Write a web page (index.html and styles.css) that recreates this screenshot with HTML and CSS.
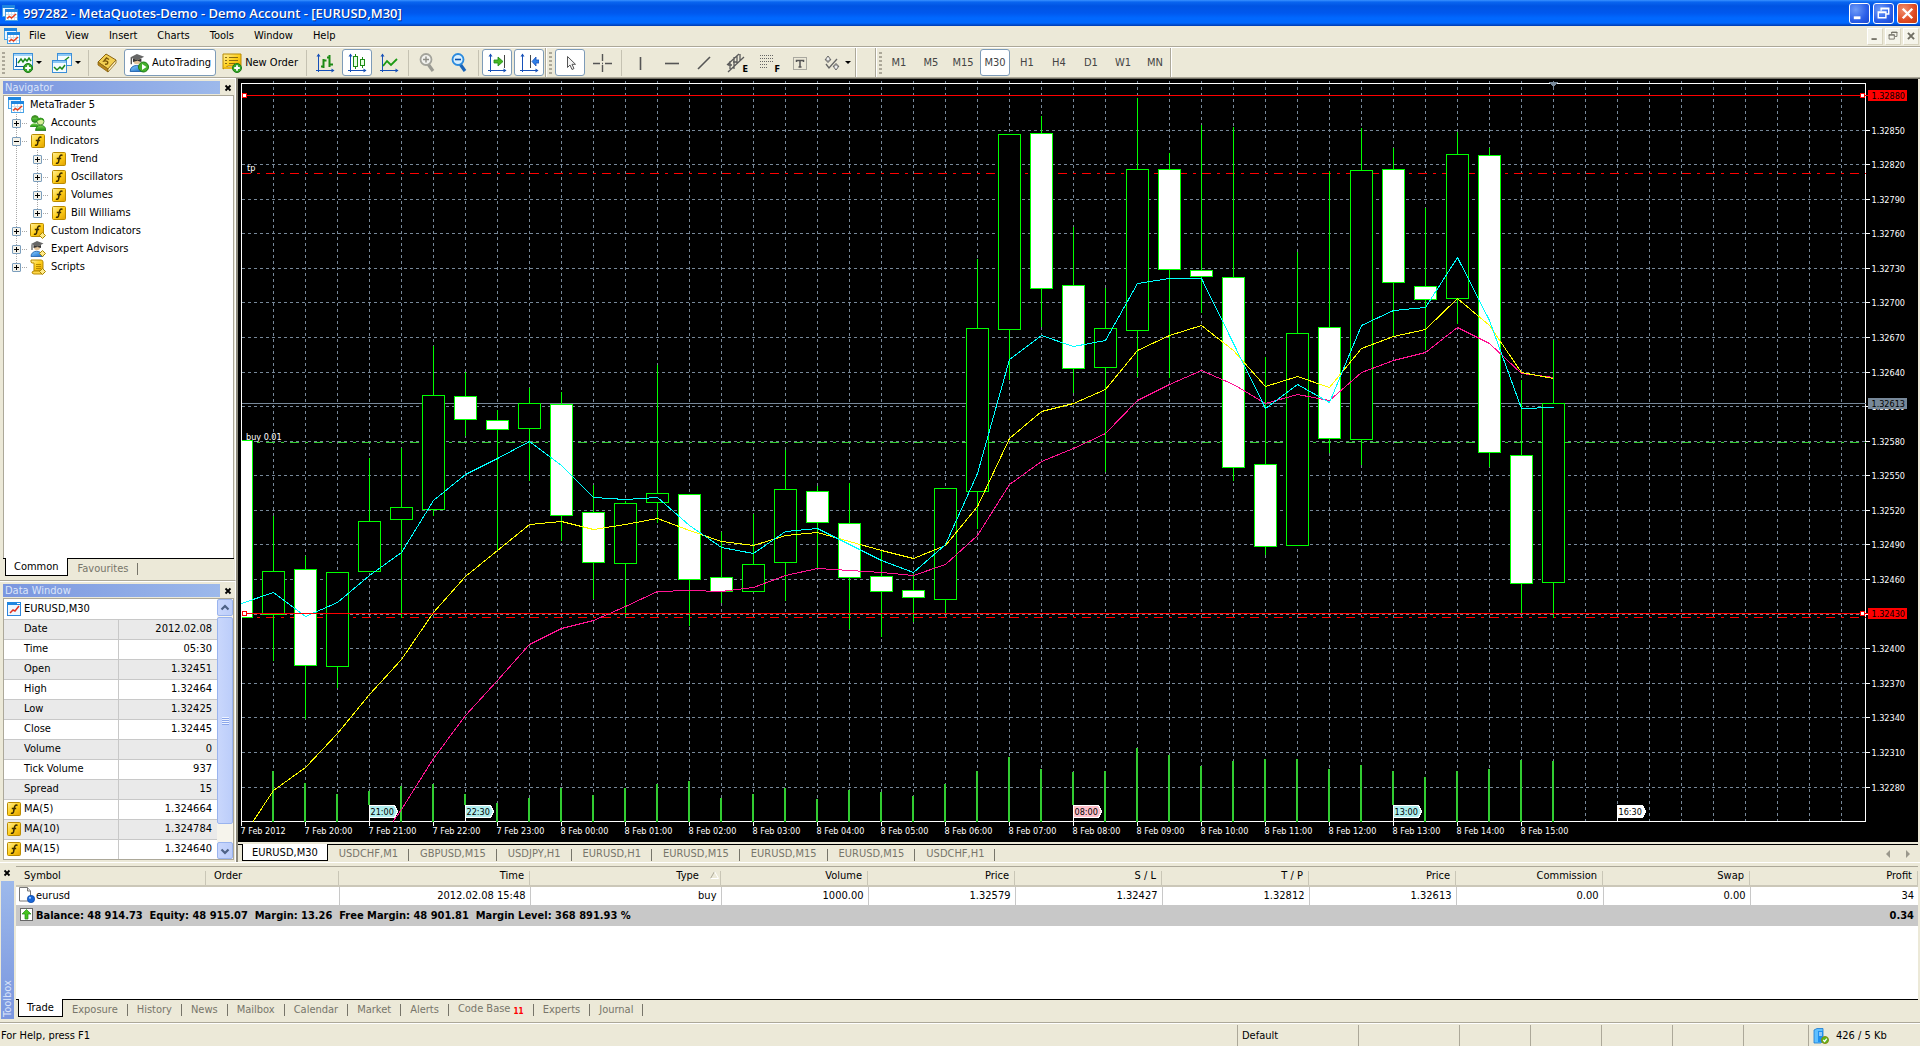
FILE: index.html
```html
<!DOCTYPE html>
<html lang="en">
<head>
<meta charset="utf-8">
<title>997282 - MetaQuotes-Demo - Demo Account - [EURUSD,M30]</title>
<link rel="stylesheet" href="styles.css">
</head>
<body>
<svg class="sprite" aria-hidden="true">
  <defs>
    <linearGradient id="g-gold" x1="0" y1="0" x2="1" y2="1"><stop offset="0" stop-color="#fff0a0"/><stop offset=".5" stop-color="#ffcf1a"/><stop offset="1" stop-color="#e0a000"/></linearGradient>
    <linearGradient id="g-green" x1="0" y1="0" x2="0" y2="1"><stop offset="0" stop-color="#7fdc50"/><stop offset="1" stop-color="#1e8c12"/></linearGradient>
    <linearGradient id="g-blue" x1="0" y1="0" x2="1" y2="1"><stop offset="0" stop-color="#8cd0ff"/><stop offset="1" stop-color="#1668c8"/></linearGradient>
  </defs>
  <symbol id="i-app" viewBox="0 0 16 16">
    <rect x=".5" y=".5" width="12" height="11" fill="#eaf6ff" stroke="#4aa3e6"/><rect width="13" height="3" fill="#1f86e0"/>
    <rect x="3.500" y="4.500" width="12" height="11" fill="#fff" stroke="#4aa3e6"/><rect x="3" y="4" width="13" height="3" fill="#1f86e0"/>
    <path d="M6.500 7v8M9.500 7v8M12.500 7v8M4 9.500h11M4 12.500h11" stroke="#cfe0ee"/>
    <path d="M5 13.500l2.500-2 2 1.500 4.500-4" fill="none" stroke="#e8401c" stroke-width="1.500"/>
  </symbol>
  <symbol id="i-chartwin" viewBox="0 0 14 14">
    <rect x=".5" y=".5" width="13" height="13" fill="#eef7ff" stroke="#2c86dc"/><rect width="14" height="3" fill="#1f86e0"/>
    <path d="M3 11l3-3 2 1 4-5" fill="none" stroke="#e03020" stroke-width="1.500"/><path d="M10 1.500h3" stroke="#fff"/>
  </symbol>
  <symbol id="i-func" viewBox="0 0 14 14">
    <rect x=".5" y=".5" width="13" height="13" rx="1" fill="url(#g-gold)" stroke="#b98a00"/>
    <path d="M10.500 3.500C8.500 2.500 7.800 3.500 7.300 6L6.500 10C6.200 11.300 5 11.600 4 11M4.800 6.500h4.400" fill="none" stroke="#3c2c00" stroke-width="1.500"/>
  </symbol>
  <symbol id="i-custom" viewBox="0 0 16 16">
    <use href="#i-func" width="14" height="14"/><path d="M12.500 9.500l3 3-3 3-3-3z" fill="#ffe98a" stroke="#a88600"/>
  </symbol>
  <symbol id="i-people" viewBox="0 0 16 16">
    <circle cx="5" cy="4" r="3.500" fill="url(#g-green)" stroke="#1d6d12" stroke-width=".7"/><path d="M0 12c0-5 9-5 9 0z" fill="url(#g-green)"/>
    <path d="M2 3c0-3 6-3 6 0l-3-.5z" fill="#3f8f20"/>
    <circle cx="10.500" cy="6.500" r="3.500" fill="#d7ef98" stroke="#1d6d12" stroke-width=".7"/><path d="M7 6c0-4 7-4 7.200 0l-3-1.500z" fill="#2b9c18"/>
    <path d="M5.500 15.500c0-7 10.500-7 10.500 0z" fill="url(#g-green)" stroke="#1d6d12" stroke-width=".7"/>
  </symbol>
  <symbol id="i-expert" viewBox="0 0 16 16">
    <path d="M1 15.500c0-7 11-7 12 0z" fill="url(#g-blue)" stroke="#1b5ca8" stroke-width=".8"/><circle cx="7" cy="6" r="3.200" fill="#e3c49a"/>
    <path d="M1 3l6-3 6.500 2.500L7.500 5.500z" fill="#666"/><path d="M3.500 4v3l4-1 3.500 1V4L7.500 5.500z" fill="#333"/><path d="M2 3.500V9" stroke="#333"/>
  </symbol>
  <symbol id="i-expert2" viewBox="0 0 16 16">
    <use href="#i-expert" width="16" height="16"/><path d="M12.500 9.500l3 3-3 3-3-3z" fill="#ffe98a" stroke="#a88600"/>
  </symbol>
  <symbol id="i-script" viewBox="0 0 16 16">
    <path d="M1 1h10q2 0 2 2v9H4V4H2Q.5 4 1 1z" fill="url(#g-gold)" stroke="#b98a00"/><path d="M4 12h9q1 3-1 3H4q-2 0-2-2l2-1z" fill="#ffd84a" stroke="#b98a00"/>
    <path d="M6 5.500h5M6 7.500h5M6 9.500h5" stroke="#b98a00"/><path d="M12.500 9.500l3 3-3 3-3-3z" fill="#ffe98a" stroke="#a88600"/>
  </symbol>
  <symbol id="i-close" viewBox="0 0 8 8"><path d="M1.500 1.500l5 5M6.500 1.500l-5 5" stroke="currentColor" stroke-width="1.800"/></symbol>
  <symbol id="i-plus" viewBox="0 0 10 10">
    <circle cx="5" cy="5" r="4.500" fill="#37a82a" stroke="#1d7a14"/><path d="M5 2.200v5.600M2.200 5h5.600" stroke="#fff" stroke-width="1.800"/>
  </symbol>
  <symbol id="i-newchart" viewBox="0 0 20 20">
    <rect x=".5" y=".5" width="19" height="16" fill="#f4fbff" stroke="#3b8fd8"/><rect x="1" y="1" width="18" height="2" fill="#9fd2f8"/>
    <path d="M3.500 5v9M2 13.500h10M6 13.500h9" stroke="#0a5aa8"/><path d="M5 10l3-4 2 3 2-3 2 2 2-3 2 3" fill="none" stroke="#1b8a1b" stroke-width="1.500"/>
    <use href="#i-plus" x="10" y="10" width="10" height="10"/>
  </symbol>
  <symbol id="i-profiles" viewBox="0 0 20 20">
    <rect x="5.500" y=".5" width="14" height="12" fill="#f4fbff" stroke="#3b8fd8"/><rect x="6" y="1" width="13" height="2" fill="#8cc8f6"/>
    <path d="M12 8l5-4" stroke="#1b8a1b" stroke-width="1.500"/>
    <rect x=".5" y="7.500" width="14" height="12" fill="#f4fbff" stroke="#3b8fd8"/><rect x="1" y="8" width="13" height="2" fill="#8cc8f6"/>
    <path d="M2 14l3 3 3-3 2 2 3-4" fill="none" stroke="#1b8a1b" stroke-width="1.500"/>
  </symbol>
  <symbol id="i-book" viewBox="0 0 20 20">
    <path d="M1 9L9 1l10 6-8 9z" fill="#f2cf52" stroke="#8a6410"/><path d="M1 9l10 7v3L1 12z" fill="#b8861c" stroke="#8a6410" stroke-width=".8"/><path d="M11 16l8-9v3l-8 9z" fill="#fff3c8" stroke="#8a6410" stroke-width=".8"/>
    <path d="M12 6.500L9.500 5 7 8c3-.5 5 1 3 3l-2 .3" fill="none" stroke="#7a5608" stroke-width="1.400"/>
  </symbol>
  <symbol id="i-auto" viewBox="0 0 20 20">
    <use href="#i-expert" width="18" height="20"/><circle cx="14.500" cy="14" r="5" fill="#44b02c" stroke="#1d7a14"/><path d="M13 11l4.500 3-4.500 3z" fill="#fff"/>
  </symbol>
  <symbol id="i-order" viewBox="0 0 20 20">
    <path d="M1 1h18v12H6l-5 3z" fill="url(#g-gold)" stroke="#b98a00"/><path d="M2 14h9v2H2z" fill="#e8b61c"/>
    <path d="M3 4.500h2M7 4.500h9M3 7.500h2M7 7.500h9M3 10.500h2M7 10.500h6" stroke="#8a6a10"/><use href="#i-plus" x="10" y="10" width="10" height="10"/>
  </symbol>
  <symbol id="i-axes" viewBox="0 0 20 20">
    <path d="M3.500 1v18M1 17.500h18" stroke="#1650b8"/><path d="M1.500 3.500l2-3 2 3zM16.500 15.500l3 2-3 2z" fill="#1650b8"/>
  </symbol>
  <symbol id="i-bars" viewBox="0 0 20 20">
    <use href="#i-axes" width="20" height="20"/><path d="M8.500 6v9M6 13.500h3M9 7.500h2.500M14.500 2v12M12 4.500h3M15 11.500h3" stroke="#1c8a14" stroke-width="2"/>
  </symbol>
  <symbol id="i-candles" viewBox="0 0 20 20">
    <use href="#i-axes" width="20" height="20"/><path d="M8.500 1v15M15.500 4v11" stroke="#1c8a14"/><rect x="6.500" y="3.500" width="4" height="10" fill="#e6ffe0" stroke="#1c8a14"/><rect x="13.500" y="6.500" width="4" height="6" fill="#e6ffe0" stroke="#1c8a14"/>
  </symbol>
  <symbol id="i-line" viewBox="0 0 20 20">
    <use href="#i-axes" width="20" height="20"/><path d="M4 13l4-5 4 4 6-6" fill="none" stroke="#1c9a14" stroke-width="1.800"/>
  </symbol>
  <symbol id="i-zoomin" viewBox="0 0 16 20">
    <path d="M9 11l5 7" stroke="#9a9a92" stroke-width="3.200"/><circle cx="7" cy="6.500" r="5.500" fill="#f2f2ee" stroke="#a3a39b" stroke-width="1.800"/><path d="M7 3.500v6M4 6.500h6" stroke="#8d8d86" stroke-width="1.400"/>
  </symbol>
  <symbol id="i-zoomout" viewBox="0 0 16 20">
    <path d="M9 11l5 7" stroke="#1a64b8" stroke-width="3.200"/><circle cx="7" cy="6.500" r="5.500" fill="#d8efff" stroke="#2a8ade" stroke-width="1.800"/><path d="M4 6.500h6" stroke="#0a4fa8" stroke-width="1.600"/>
  </symbol>
  <symbol id="i-scroll" viewBox="0 0 20 20">
    <use href="#i-axes" width="20" height="20"/><path d="M17.500 2v13" stroke="#444"/><path d="M7 7h4V4l5 4.500L11 13v-3H7z" fill="#48b822" stroke="#1c8a14" stroke-width=".8"/>
  </symbol>
  <symbol id="i-shift" viewBox="0 0 20 20">
    <use href="#i-axes" width="20" height="20"/><path d="M11.500 2v13" stroke="#444"/><path d="M20 7h-3V4l-4 4.500 4 4.500v-3h3z" fill="#2f7fe8" stroke="#1650b8" stroke-width=".8"/>
  </symbol>
  <symbol id="i-cursor" viewBox="0 0 20 20"><path d="M7.500 3.500v11l2.500-2.500 2 4.500 2-1-2-4.200h3.500z" fill="#f4f4f4" stroke="#555"/></symbol>
  <symbol id="i-cross" viewBox="0 0 20 20"><path d="M10.500 1v7M10.500 12v7M1 10.500h7M13 10.500h7M10 10.500h1" stroke="#555" stroke-width="1.400"/></symbol>
  <symbol id="i-vline" viewBox="0 0 20 20"><path d="M10.500 4v13" stroke="#555" stroke-width="1.600"/></symbol>
  <symbol id="i-hline" viewBox="0 0 20 20"><path d="M3 10.500h14" stroke="#555" stroke-width="1.600"/></symbol>
  <symbol id="i-trend" viewBox="0 0 20 20"><path d="M4 16L16 4" stroke="#555" stroke-width="1.600"/></symbol>
  <symbol id="i-channel" viewBox="0 0 20 20"><path d="M1 12L13 1M2 19L18 4M4 8v8M8 4v12M11 3v8M14 1v7M2 12h4M7 9h4" stroke="#5a5a5a" stroke-width="1.300"/></symbol>
  <symbol id="i-fibo" viewBox="0 0 20 20"><path d="M2 2.500h14M2 5.500h14M2 8.500h14M2 11.500h8M2 14.500h8" stroke="#666" stroke-dasharray="1 1"/></symbol>
  <symbol id="i-text" viewBox="0 0 20 20"><rect x="3.500" y="4.500" width="13" height="12" fill="none" stroke="#666" stroke-dasharray="1 1"/><path d="M6.500 9V7.500h7V9M10 7.500V14M8.500 14h3" fill="none" stroke="#555" stroke-width="1.500"/></symbol>
  <symbol id="i-shapes" viewBox="0 0 20 20"><path d="M6 3L3 7h2v2h2V7h2zM14 17l3-4h-2v-2h-2v2h-2z" fill="#eee" stroke="#666"/><path d="M4 11l3 4 8-9" fill="none" stroke="#666" stroke-width="1.300"/></symbol>
  <symbol id="i-doc" viewBox="0 0 16 16">
    <path d="M.5.500h8l3 3.500v10H.5z" fill="#fff" stroke="#777"/><path d="M8.500.500V4h3" fill="#ddd" stroke="#777"/><circle cx="12" cy="12" r="3.700" fill="#1766d8" stroke="#0a3f98" stroke-width=".6"/><circle cx="11" cy="10.800" r="1.100" fill="#9cc8ff"/>
  </symbol>
  <symbol id="i-up" viewBox="0 0 14 14">
    <rect x=".5" y=".5" width="12" height="12" fill="#fff" stroke="#666"/><path d="M6.500 1.500l4.500 4.500H8v5H5V6H2z" fill="#46c41e" stroke="#1c8a14" stroke-width=".7"/>
  </symbol>
  <symbol id="i-server" viewBox="0 0 16 16">
    <path d="M1 2l3-1.500h6V13L8 15H1z" fill="#5fc0ff" stroke="#1878d0" stroke-width=".8"/><path d="M5 3h5v11H5z" fill="#1f90ee"/><path d="M6 5h3M6 7h3" stroke="#fff"/>
    <circle cx="12" cy="12" r="3.500" fill="#5cb81e" stroke="#8a8a10"/><path d="M10.300 12l1.300 1.500 2.200-2.800" fill="none" stroke="#fff" stroke-width="1.300"/>
  </symbol>
</svg>

<header class="titlebar">
  <svg class="ic16"><use href="#i-app"/></svg>
  <h1>997282 - MetaQuotes-Demo - Demo Account - [EURUSD,M30]</h1>
  <button class="win" aria-label="Minimize"><svg viewBox="0 0 20 20"><path d="M4 14.500h7" stroke="#fff" stroke-width="3"/></svg></button>
  <button class="win" aria-label="Restore"><svg viewBox="0 0 20 20"><path d="M7.500 7V4.500h8v6H13M7 5h9M4.500 8.500h8v6h-8zM4 9h9" fill="none" stroke="#fff" stroke-width="1.500"/></svg></button>
  <button class="win red" aria-label="Close"><svg viewBox="0 0 20 20"><path d="M5 5l10 10M15 5L5 15" stroke="#fff" stroke-width="2.500"/></svg></button>
</header>

<nav class="menubar">
  <svg class="ic16"><use href="#i-app"/></svg>
  <button>File</button><button>View</button><button>Insert</button><button>Charts</button><button>Tools</button><button>Window</button><button>Help</button>
  <span class="mdi">
    <button aria-label="Minimize chart"><svg viewBox="0 0 16 16"><path d="M4 11.500h6" stroke="#6f6d62" stroke-width="2"/></svg></button>
    <button aria-label="Restore chart"><svg viewBox="0 0 16 16"><path d="M6.500 6V3.500h6v5H10M6 4h7M3.500 6.500h6v5h-6zM3 7h7" fill="none" stroke="#6f6d62"/></svg></button>
    <button aria-label="Close chart"><svg viewBox="0 0 16 16"><path d="M4.500 4.500l7 7M11.500 4.500l-7 7" stroke="#6f6d62" stroke-width="2.200"/></svg></button>
  </span>
</nav>

<div class="toolbar">
  <i class="grip"></i>
  <button class="tool lead" aria-label="New chart"><svg class="ic20"><use href="#i-newchart"/></svg></button><i class="caret"></i>
  <button class="tool" aria-label="Profiles"><svg class="ic20"><use href="#i-profiles"/></svg></button><i class="caret"></i>
  <i class="sep"></i>
  <button class="tool" aria-label="Market watch"><svg class="ic20"><use href="#i-book"/></svg></button>
  <button class="tool wide on"><svg class="ic20"><use href="#i-auto"/></svg>AutoTrading</button>
  <button class="tool wide"><svg class="ic20"><use href="#i-order"/></svg>New Order</button>
  <i class="sep"></i>
  <button class="tool" aria-label="Bar chart"><svg class="ic20"><use href="#i-bars"/></svg></button>
  <button class="tool on" aria-label="Candlesticks"><svg class="ic20"><use href="#i-candles"/></svg></button>
  <button class="tool" aria-label="Line chart"><svg class="ic20"><use href="#i-line"/></svg></button>
  <i class="sep"></i>
  <button class="tool" aria-label="Zoom in"><svg class="ic20"><use href="#i-zoomin"/></svg></button>
  <button class="tool" aria-label="Zoom out"><svg class="ic20"><use href="#i-zoomout"/></svg></button>
  <i class="sep"></i>
  <button class="tool on" aria-label="Auto scroll"><svg class="ic20"><use href="#i-scroll"/></svg></button>
  <button class="tool on" aria-label="Chart shift"><svg class="ic20"><use href="#i-shift"/></svg></button>
  <i class="edge"></i><i class="grip"></i>
  <button class="tool on" aria-label="Cursor"><svg class="ic20"><use href="#i-cursor"/></svg></button>
  <button class="tool" aria-label="Crosshair"><svg class="ic20"><use href="#i-cross"/></svg></button>
  <i class="sep"></i>
  <button class="tool" aria-label="Vertical line"><svg class="ic20"><use href="#i-vline"/></svg></button>
  <button class="tool" aria-label="Horizontal line"><svg class="ic20"><use href="#i-hline"/></svg></button>
  <button class="tool" aria-label="Trendline"><svg class="ic20"><use href="#i-trend"/></svg></button>
  <button class="tool" aria-label="Equidistant channel"><svg class="ic20"><use href="#i-channel"/></svg><b>E</b></button>
  <button class="tool" aria-label="Fibonacci"><svg class="ic20"><use href="#i-fibo"/></svg><b>F</b></button>
  <button class="tool" aria-label="Text"><svg class="ic20"><use href="#i-text"/></svg></button>
  <button class="tool" aria-label="Shapes"><svg class="ic20"><use href="#i-shapes"/></svg></button><i class="caret"></i>
  <i class="edge"></i><i class="edge far"></i><i class="grip"></i>
  <div class="frames">
    <button>M1</button><button>M5</button><button>M15</button><button class="on">M30</button><button>H1</button><button>H4</button><button>D1</button><button>W1</button><button>MN</button>
  </div>
  <i class="edge"></i>
</div>

<main class="work">
  <aside class="side">
    <section class="panel navigator">
      <header class="caption"><h2>Navigator</h2><button aria-label="Close navigator"><svg><use href="#i-close"/></svg></button></header>
      <div class="tree">
        <p class="root"><svg class="ic16"><use href="#i-app"/></svg>MetaTrader 5</p>
        <ul class="nodes">
          <li><div><button class="exp" aria-label="Expand"></button><i></i><svg class="ic16"><use href="#i-people"/></svg>Accounts</div></li>
          <li><div><button class="exp open" aria-label="Collapse"></button><i></i><svg class="ic14"><use href="#i-func"/></svg>Indicators</div>
            <ul class="nodes">
              <li><div><button class="exp" aria-label="Expand"></button><i></i><svg class="ic14"><use href="#i-func"/></svg>Trend</div></li>
              <li><div><button class="exp" aria-label="Expand"></button><i></i><svg class="ic14"><use href="#i-func"/></svg>Oscillators</div></li>
              <li><div><button class="exp" aria-label="Expand"></button><i></i><svg class="ic14"><use href="#i-func"/></svg>Volumes</div></li>
              <li><div><button class="exp" aria-label="Expand"></button><i></i><svg class="ic14"><use href="#i-func"/></svg>Bill Williams</div></li>
            </ul>
          </li>
          <li><div><button class="exp" aria-label="Expand"></button><i></i><svg class="ic16"><use href="#i-custom"/></svg>Custom Indicators</div></li>
          <li><div><button class="exp" aria-label="Expand"></button><i></i><svg class="ic16"><use href="#i-expert2"/></svg>Expert Advisors</div></li>
          <li><div><button class="exp" aria-label="Expand"></button><i></i><svg class="ic16"><use href="#i-script"/></svg>Scripts</div></li>
        </ul>
      </div>
      <div class="tabs"><button class="on">Common</button><button>Favourites</button></div>
    </section>
    <section class="panel datawin">
      <header class="caption"><h2>Data Window</h2><button aria-label="Close data window"><svg><use href="#i-close"/></svg></button></header>
      <div class="databox">
        <table class="data">
          <tr class="head"><th colspan="2"><svg class="ic14"><use href="#i-chartwin"/></svg>EURUSD,M30</th></tr>
          <tr><th>Date</th><td>2012.02.08</td></tr>
          <tr><th>Time</th><td>05:30</td></tr>
          <tr><th>Open</th><td>1.32451</td></tr>
          <tr><th>High</th><td>1.32464</td></tr>
          <tr><th>Low</th><td>1.32425</td></tr>
          <tr><th>Close</th><td>1.32445</td></tr>
          <tr><th>Volume</th><td>0</td></tr>
          <tr><th>Tick Volume</th><td>937</td></tr>
          <tr><th>Spread</th><td>15</td></tr>
          <tr class="ind"><th><svg class="ic14"><use href="#i-func"/></svg>MA(5)</th><td>1.324664</td></tr>
          <tr class="ind"><th><svg class="ic14"><use href="#i-func"/></svg>MA(10)</th><td>1.324784</td></tr>
          <tr class="ind"><th><svg class="ic14"><use href="#i-func"/></svg>MA(15)</th><td>1.324640</td></tr>
        </table>
        <div class="scroll">
          <button aria-label="Scroll up"><svg viewBox="0 0 14 14"><path d="M3.500 8.500L7 5l3.500 3.500" fill="none" stroke="#4d6185" stroke-width="2.200"/></svg></button>
          <div class="thumb"><i></i></div>
          <button aria-label="Scroll down"><svg viewBox="0 0 14 14"><path d="M3.500 5.500L7 9l3.500-3.500" fill="none" stroke="#4d6185" stroke-width="2.200"/></svg></button>
        </div>
      </div>
    </section>
  </aside>
  <section class="chartpane">
    <svg id="chart" class="chart" role="img" aria-label="EURUSD,M30 candlestick chart"></svg>
    <div class="tabs charts">
      <button class="on">EURUSD,M30</button><button>USDCHF,M1</button><button>GBPUSD,M15</button><button>USDJPY,H1</button><button>EURUSD,H1</button><button>EURUSD,M15</button><button>EURUSD,M15</button><button>EURUSD,M15</button><button>USDCHF,H1</button>
      <span class="arrows"><i></i><i class="right"></i></span>
    </div>
  </section>
</main>

<section class="toolbox">
  <div class="rail"><button aria-label="Close toolbox"><svg><use href="#i-close"/></svg></button><h2>Toolbox</h2></div>
  <div class="terminal">
    <table class="trade">
      <colgroup><col class="c-symbol"><col class="c-order"><col class="c-wide"><col class="c-wide"><col class="c-num"><col class="c-num"><col class="c-num"><col class="c-num"><col class="c-num"><col class="c-num"><col class="c-num"><col></colgroup>
      <thead><tr><th>Symbol</th><th>Order</th><th>Time</th><th>Type <svg class="sort" viewBox="0 0 9 8"><path d="M4.500.500l-4 7" stroke="#aca899"/><path d="M4.500.500l4 7h-8" fill="none" stroke="#fff"/></svg></th><th>Volume</th><th>Price</th><th>S / L</th><th>T / P</th><th>Price</th><th>Commission</th><th>Swap</th><th>Profit</th></tr></thead>
      <tbody>
        <tr><td><svg class="ic16"><use href="#i-doc"/></svg>eurusd</td><td></td><td>2012.02.08 15:48</td><td>buy</td><td>1000.00</td><td>1.32579</td><td>1.32427</td><td>1.32812</td><td>1.32613</td><td>0.00</td><td>0.00</td><td>34</td></tr>
        <tr class="sum"><td colspan="11"><svg class="ic14"><use href="#i-up"/></svg>Balance: 48 914.73&nbsp; Equity: 48 915.07&nbsp; Margin: 13.26&nbsp; Free Margin: 48 901.81&nbsp; Margin Level: 368 891.93 %</td><td>0.34</td></tr>
      </tbody>
    </table>
    <div class="blank"></div>
    <div class="tabs bottom">
      <button class="on">Trade</button><button>Exposure</button><button>History</button><button>News</button><button>Mailbox</button><button>Calendar</button><button>Market</button><button>Alerts</button><button>Code Base <small>11</small></button><button>Experts</button><button>Journal</button>
    </div>
  </div>
</section>

<footer class="status">
  <span class="help">For Help, press F1</span><span class="s1">Default</span><span class="s2"></span><span class="s3"></span><span class="s3"></span><span class="s3"></span><span class="s3"></span><span class="s4"></span>
  <span class="net"><svg class="ic16"><use href="#i-server"/></svg>426 / 5 Kb</span>
</footer>
<script src="chart.js"></script>
</body>
</html>
```
FILE: styles.css
```css
* { box-sizing: border-box; margin: 0; padding: 0; }
html, body { height: 100%; }
body {
  display: flex; flex-direction: column; overflow: hidden;
  background: #ece9d8; color: #000;
  font: 11px/14px "DejaVu Sans Condensed", "DejaVu Sans", sans-serif;
}
button { font: inherit; color: inherit; background: none; border: 0; }
h1, h2, th { font-weight: normal; font-size: inherit; }
ul { list-style: none; }
svg { display: block; flex: none; }
.sprite { position: absolute; width: 0; height: 0; }
.ic14 { width: 14px; height: 14px; }
.ic16 { width: 16px; height: 16px; }
.ic20 { width: 20px; height: 20px; }

/* window title */
.titlebar {
  flex: none; height: 26px; display: flex; align-items: center; gap: 3px; padding: 0 2px;
  background: linear-gradient(#3a93ff 0, #0a66f0 2px, #0054e3 6px, #0058ee 13px, #0068ff 18px, #0068ff 23px, #0048c8 25px, #003cb0 26px);
}
.titlebar h1 { flex: 1; padding-left: 2px; color: #fff; font: 600 13px/20px "Open Sans", sans-serif; text-shadow: 1px 1px #0a2a80; }
.win { width: 21px; height: 21px; border: 1px solid #fff; border-radius: 3px; background: radial-gradient(circle at 30% 30%, #6f9cf8, #2a5ee8 60%, #1a48d0); }
.win.red { background: radial-gradient(circle at 30% 30%, #f09070, #e04a22 60%, #c03a10); }
.win svg { width: 19px; height: 19px; }

/* menu */
.menubar { flex: none; height: 21px; display: flex; align-items: center; padding: 0 1px 0 4px; border-bottom: 1px solid #aca899; }
.menubar > button { padding: 0 10px; }
.menubar > .ic16 { margin-right: -1px; }
.mdi { margin-left: auto; display: flex; gap: 2px; }
.mdi button { width: 16px; height: 17px; background: #f5f4ea; border: 1px solid #fff; border-right-color: #d8d4c0; border-bottom-color: #d8d4c0; }
.mdi svg { width: 14px; height: 14px; }

/* toolbar */
.toolbar { flex: none; height: 31px; display: flex; align-items: center; border-top: 1px solid #fff; border-bottom: 1px solid #aca899; }
.grip { flex: none; width: 3px; height: 22px; margin: 0 2px; background: repeating-linear-gradient(#aca899 0 2px, transparent 2px 4px); }
.sep { flex: none; width: 1px; height: 26px; background: #c5c2b2; margin: 0 2px 0 3px; }
.edge { flex: none; width: 2px; height: 29px; background: #fff; border-left: 1px solid #aca899; }
.edge.far { margin-left: 18px; }
.caret { flex: none; border: 3px solid transparent; border-top-color: #000; border-bottom: 0; margin: 0 4px 0 -3px; }
.tool { flex: none; position: relative; width: 30px; height: 27px; margin: 0 1px; display: flex; align-items: center; justify-content: center; }
.tool.wide { width: auto; padding: 0 4px; gap: 3px; }
.tool b { position: absolute; right: 3px; bottom: 2px; font-size: 9px; line-height: 9px; color: #000; }
.on.tool, .frames .on { background: #fff; border: 1px solid #7d9bb8; border-radius: 3px; }
.frames { display: flex; gap: 2px; color: #444; }
.frames button { width: 30px; height: 27px; }

/* workspace */
.work { flex: 1; min-height: 0; display: grid; grid-template-columns: 238px minmax(0, 1fr); }
.side { display: flex; flex-direction: column; min-height: 0; border-right: 2px solid #8d8a7c; }
.panel { display: flex; flex-direction: column; padding: 2px 1px 4px 3px; border-top: 1px solid #fff; border-bottom: 1px solid #aca899; border-right: 1px solid #fff; }
.navigator { flex: 1; min-height: 0; }
.datawin { border-bottom: 0; padding-bottom: 2px; }
.caption { flex: none; display: flex; align-items: center; justify-content: space-between; height: 13px; margin-bottom: 1px; }
.caption h2 { width: 217px; height: 13px; padding-left: 2px; line-height: 13px; color: #dbe5fa; background: linear-gradient(90deg, #7a96df, #9db9eb); }
.caption button { width: 12px; height: 12px; display: grid; place-items: center; }
.caption svg, .rail svg { width: 8px; height: 8px; }
.tree { flex: 1; background: #fff; border: 1px solid #aca899; border-bottom: 0; }
.root { display: flex; align-items: center; gap: 6px; height: 18px; padding-left: 4px; }
.nodes { background: repeating-linear-gradient(#a8a8a8 0 1px, #fff 1px 2px) 12px 0 / 1px calc(100% - 9px) no-repeat; }
.nodes .nodes { margin-left: 21px; }
.nodes div { display: flex; align-items: center; height: 18px; padding-left: 8px; }
.nodes i { width: 5px; margin: 0 3px 0 1px; border-top: 1px dotted #a8a8a8; }
.nodes svg { margin-right: 5px; }
.nodes .ic14 { margin-left: 1px; margin-right: 5px; }
.exp { flex: none; width: 9px; height: 9px; border: 1px solid #7b9ebd; border-radius: 1px; background: linear-gradient(#000, #000) center / 5px 1px no-repeat, linear-gradient(#000, #000) center / 1px 5px no-repeat, #f4f2ea; }
.exp.open { background: linear-gradient(#000, #000) center / 5px 1px no-repeat, #f4f2ea; }

/* tab strips */
.tabs { flex: none; display: flex; height: 20px; border-top: 1px solid #000; color: #77756a; line-height: 17px; }
.tabs button { position: relative; height: 18px; padding: 0 10px; white-space: nowrap; }
.tabs button::after { content: ""; position: absolute; right: 0; top: 4px; height: 12px; border-right: 1px solid #77756a; }
.tabs .on { margin: -1px 0 0 2px; padding: 0 8px; color: #000; background: #fff; border: 1px solid #000; border-top: 0; }
.tabs .on::after { content: none; }
.navigator .tabs { height: 18px; }

/* data window */
.databox { display: flex; border: 1px solid #aca899; background: #fff; }
.data { flex: 1; border-collapse: collapse; table-layout: fixed; }
.data th, .data td { height: 20px; border-bottom: 1px solid #c8c8c8; }
.data th { width: 114px; text-align: left; padding-left: 20px; border-right: 1px solid #c8c8c8; }
.data td { text-align: right; padding-right: 5px; }
.data tr:nth-child(even) { background: #eaeaea; }
.data .head th, .data .ind th { padding-left: 3px; }
.data .head th { border-right: 0; }
.data tr:last-child > * { border-bottom: 0; }
.data svg { display: inline-block; vertical-align: middle; margin-right: 3px; }
.scroll { flex: none; width: 16px; display: flex; flex-direction: column; gap: 1px; background: #f6f4ec; }
.scroll button, .thumb { border: 1px solid #9ab4ee; border-radius: 2px; background: linear-gradient(90deg, #c9d7fc, #bccdfa); }
.scroll button { height: 17px; }
.scroll button svg { width: 14px; height: 14px; }
.thumb { flex: 1; margin-bottom: 17px; display: flex; align-items: center; justify-content: center; }
.thumb i { width: 7px; height: 8px; background: repeating-linear-gradient(#eef3ff 0 1px, #8ba6ea 1px 2px); }

/* chart */
.chartpane { display: flex; flex-direction: column; min-width: 0; padding-right: 2px; border-top: 1px solid #716f64; }
.chart { flex: 1; min-height: 0; width: 100%; background: #000; shape-rendering: crispEdges; font-size: 9px; }
.chart text { fill: #fff; }
.chart .dark { fill: #000; }
.grid { stroke: #778899; stroke-dasharray: 3 3; }
.frame { stroke: #fff; fill: none; }
.bid { stroke: #778899; }
.slate { fill: #778899; }
.stop, .entry { stroke: #f00; stroke-dasharray: 9 6 3 6; }
.entry { stroke: #32cd32; }
.level { stroke: #f00; }
.handle { stroke: #f00; fill: #fff; }
.tag { fill: #f00; }
.wick { stroke: #0f0; }
.body { stroke: #0f0; fill: #000; }
.body.down { fill: #fff; }
.vol { stroke: #32cd32; stroke-width: 2; }
.ma { fill: none; }
.ma.fast { stroke: #0ff; }
.ma.mid { stroke: #ff0; }
.ma.slow { stroke: #ff1493; }
.flag { stroke: #fff; fill: #afeeee; }
.flag.rose { fill: #ffc0cb; }
.flag.plain { fill: #fff; }
.charts { height: 18px; margin-top: 2px; }
.charts button { height: 17px; padding: 0 11px; }
.charts .on { margin-left: 4px; padding: 0 9px; }
.arrows { margin-left: auto; display: flex; gap: 16px; padding: 5px 8px 0 0; }
.arrows i { width: 4px; height: 8px; border: 4px solid transparent; border-right-color: #9a988c; border-left: 0; }
.arrows .right { border: 4px solid transparent; border-left-color: #9a988c; border-right: 0; }

/* toolbox */
.toolbox { flex: none; height: 160px; display: flex; padding: 3px 2px 3px 1px; border-top: 1px solid #fff; }
.rail { flex: none; width: 15px; display: flex; flex-direction: column; gap: 1px; }
.rail button { height: 14px; display: flex; align-items: center; padding-left: 2px; }
.rail h2 { flex: 1; width: 13px; writing-mode: vertical-rl; transform: rotate(180deg); padding-top: 2px; line-height: 13px; color: #dbe5fa; background: linear-gradient(#7a96df, #9db9eb); }
.terminal { flex: 1; min-width: 0; display: flex; flex-direction: column; border-top: 1px solid #aca899; }
.trade { width: 100%; border-collapse: collapse; table-layout: fixed; background: #fff; }
.c-symbol { width: 190px; }
.c-order { width: 133px; }
.c-wide { width: 191px; }
.c-num { width: 147px; }
.trade th { height: 19px; padding: 0 6px; text-align: right; white-space: nowrap; background: linear-gradient(#c9c6b6, #c9c6b6) right 4px / 1px 14px no-repeat, #ece9d8; border-bottom: 2px solid #cbc7b8; }
.trade td { height: 19px; padding: 0 4px; text-align: right; white-space: nowrap; border-right: 1px solid #c8c8c8; }
.trade th:nth-child(-n+2) { text-align: left; padding-left: 8px; }
.trade td:first-child { text-align: left; padding-left: 3px; }
.trade tbody tr:first-child td:first-child { border-right: 0; }
.trade td:last-child { border-right: 0; }
.trade td svg { display: inline-block; vertical-align: middle; margin: -2px 1px 0 0; }
.trade .sort { display: inline-block; width: 9px; height: 8px; margin: 0 -4px 0 8px; }
.sum { background: #c8c8c8; font-weight: bold; }
.trade .sum td { height: 21px; border: 0; }
.trade .sum .ic14 { margin: -2px 2px 0 1px; }
.blank { flex: 1; background: #fff; }
.bottom button { padding: 0 10px 0 9px; }
.bottom small { color: #f00; font-size: 8px; font-weight: bold; vertical-align: -2px; }

/* status bar */
.status { flex: none; height: 24px; display: flex; align-items: stretch; border-top: 1px solid #aca899; box-shadow: inset 0 1px #fff; line-height: 22px; padding-top: 2px; }
.status span { border-left: 1px solid #aca899; padding-left: 4px; }
.status .help { flex: 1; border: 0; padding-left: 1px; }
.s1 { width: 121px; }
.s2 { width: 101px; }
.s3 { width: 71px; }
.s4 { width: 65px; }
.status .net { width: 112px; display: flex; align-items: center; gap: 7px; }
```
FILE: chart.js
```js
// Levels are kept in window pixels for a 763px high pane whose corner is at 238,79.
const LEFT = 238, TOP = 79, PANE = 763, FIRST = 273, STEP = 32;

// [high, body top, body bottom, low, falling]
const bars = [
  [515,571,614,660,0],[555,569,665,718,1],[572,572,666,687,0],[457,521,571,571,0],[447,507,519,617,0],
  [345,395,509,515,0],[371,396,419,435,1],[409,420,429,550,1],[387,403,428,480,0],[391,404,515,540,1],
  [484,512,562,598,1],[500,503,563,615,0],[364,493,502,522,0],[493,494,579,625,1],[531,577,591,602,1],
  [513,564,591,591,0],[449,489,562,600,0],[485,491,522,568,1],[482,523,577,628,1],[550,576,591,636,1],
  [573,590,597,621,1],[487,488,599,612,0],[258,328,491,528,0],[134,134,329,379,0],[115,133,288,326,1],
  [226,285,368,392,1],[287,328,367,471,0],[97,169,330,376,0],[152,169,269,377,1],[124,270,276,312,1],
  [126,277,467,480,1],[356,464,546,554,1],[251,333,545,545,0],[170,327,438,452,1],[127,170,439,464,0],
  [147,169,282,336,1],[207,286,299,349,1],[131,154,298,323,0],[147,155,452,466,1],[379,455,583,612,1],
  [339,403,582,617,0]
];
const volumes = [770,782,793,790,785,783,793,802,797,787,794,787,783,780,797,793,787,798,789,791,795,783,770,756,768,771,770,747,754,765,760,758,758,768,764,770,776,770,768,759,760];
const fast = [603,592,616,602,575,552,500,474,458,441,465,497,499,497,525,547,553,531,528,544,560,572,544,473,359,335,346,340,283,278,278,343,408,384,402,325,310,307,257,320,408,407];
const mid = [790,767,733,694,659,612,576,550,524,521,529,524,518,530,541,545,535,532,541,550,558,545,506,438,411,403,389,350,335,325,350,386,376,387,348,336,329,298,325,372,378];
const slow = [809,758,715,680,644,628,620,606,591,590,591,587,575,568,570,572,575,564,535,484,461,448,433,400,384,370,384,403,394,400,372,360,352,327,343,373,377];
const flags = [[3,'21:00',''],[6,'22:30',''],[25,'08:00','rose'],[35,'13:00',''],[42,'16:30','plain']];

function draw() {
  const svg = document.getElementById('chart');
  const box = svg.getBoundingClientRect();
  const W = Math.round(box.width), H = Math.round(box.height);
  const Y = v => Math.round((v - TOP) * H / PANE) + .5;
  const X = i => FIRST - LEFT + STEP * i + .5;
  const R = W - 52.5, B = H - 20.5, L = 3.5;
  const out = [];
  const line = (c, x1, y1, x2, y2) => out.push(`<line class="${c}" x1="${x1}" y1="${y1}" x2="${x2}" y2="${y2}"/>`);
  const text = (x, y, s, c = '') => out.push(`<text class="${c}" x="${x}" y="${y}">${s}</text>`);

  for (let i = 0; X(i) < R; i++) line('grid', X(i), 2, X(i), B);
  for (let k = 0; k < 20; k++) {
    const y = Y(130 + Math.floor(k * 34.58));
    if (y > B) break;
    line('grid', L, y, R, y);
    line('frame', R, y, R + 4, y);
    text(R + 6, y + 3.5, ((132850 - 30 * k) / 100000).toFixed(5));
  }
  out.push(`<path class="frame" d="M${L} ${B}V4.500H${R}V${B}Z"/>`);
  line('bid', L, Y(403), R, Y(403));
  line('stop', L, Y(173), R, Y(173));
  line('entry', L, Y(442), R, Y(442));
  line('stop', L, Y(617), R, Y(617));

  const flagged = flags.map(f => f[0]);
  volumes.forEach((v, i) => line('vol', X(i) - .5, Y(v), X(i) - .5, flagged.includes(i) ? B - 17 : B));
  out.push(`<path class="body down" d="M4 ${Y(440)}H14.500V${Y(617)}H4"/>`);
  bars.forEach(([hi, top, bottom, lo, down], i) => {
    line('wick', X(i), Y(hi), X(i), Y(lo));
    out.push(`<rect class="body${down ? ' down' : ''}" x="${X(i) - 11}" y="${Y(top)}" width="22" height="${Y(bottom) - Y(top)}"/>`);
  });

  const ma = (c, lead, data, start) => out.push(`<polyline class="ma ${c}" points="${lead} ${data.map((v, n) => X(n + start) + ',' + Y(v)).join(' ')}"/>`);
  ma('slow', `155,${B}`, slow, 4);
  ma('mid', `15,${B}`, mid, 0);
  ma('fast', '', fast, -1);

  [[95, '1.32880'], [613, '1.32430']].forEach(([v, label]) => {
    line('level', L, Y(v), R + 3, Y(v));
    out.push(`<rect class="handle" x="${L + 1}" y="${Y(v) - 2}" width="4" height="4"/><rect class="handle" x="${R - 5}" y="${Y(v) - 2}" width="4" height="4"/>`);
    out.push(`<rect class="tag" x="${R + 2.5}" y="${Y(v) - 5.5}" width="39" height="11"/>`);
    text(R + 6, Y(v) + 3.5, label, 'dark');
  });
  out.push(`<rect class="slate" x="${R + 2.5}" y="${Y(403) - 5.5}" width="39" height="11"/>`);
  text(R + 6, Y(403) + 3.5, '1.32613', 'dark');
  out.push(`<path class="slate" d="M${X(40) - 4.5} 3h9l-4.500 5z"/>`);
  text(9, Y(173) - 2.5, 'tp');
  text(8, Y(442) - 2.5, 'buy 0.01');

  flags.forEach(([i, s, c]) => {
    const x = X(i), y = B - 16;
    out.push(`<path class="flag ${c}" d="M${x} ${B}V${y}h25l3 6-3 6H${x}"/>`);
    text(x + 1, y + 9.5, s, 'dark');
  });

  // one caption every second bar, an hour apart, starting at 20:00
  for (let i = -1; i <= 39; i += 2) {
    const hour = 20 + (i - 1) / 2;
    const label = i < 0 ? '7 Feb 2012' : `${hour < 24 ? 7 : 8} Feb ${String(hour % 24).padStart(2, '0')}:00`;
    line('frame', X(i), B, X(i), B + 4);
    text(X(i) - 1, B + 12.5, label);
  }
  svg.innerHTML = out.join('');
}
draw();
addEventListener('resize', draw);
```
